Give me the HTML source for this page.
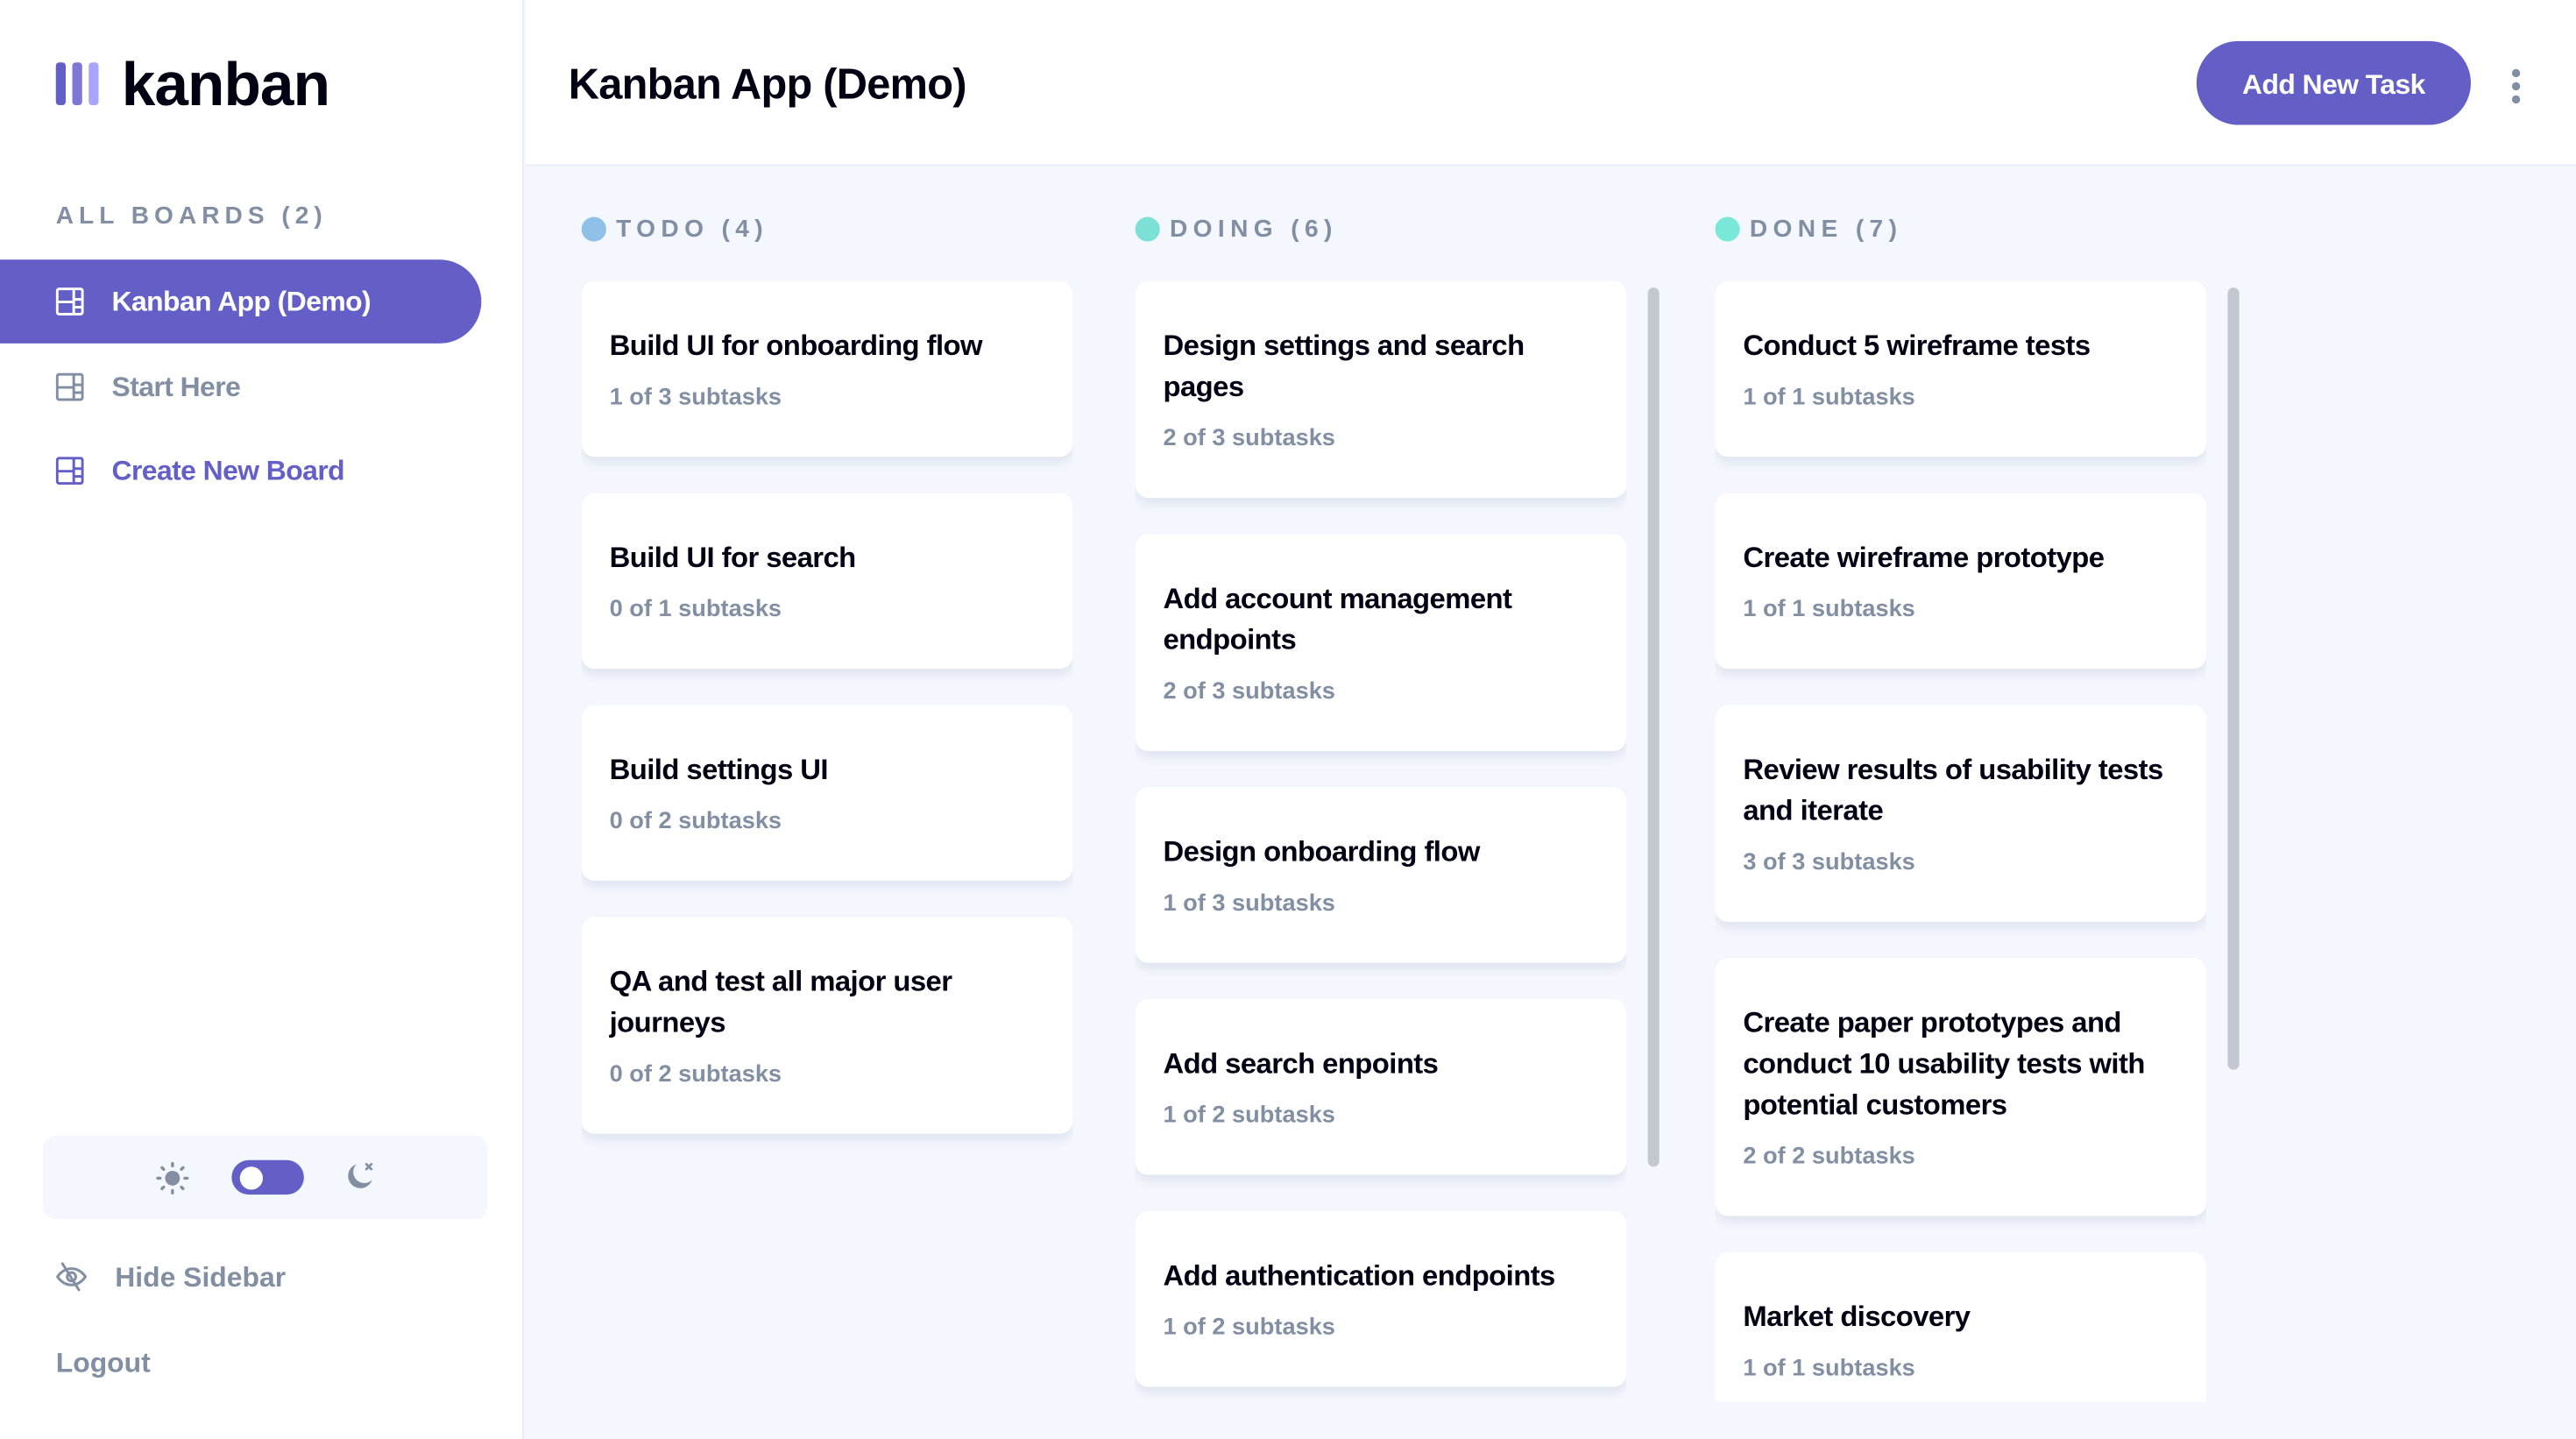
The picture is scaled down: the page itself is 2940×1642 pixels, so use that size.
<!DOCTYPE html>
<html><head><meta charset="utf-8"><style>
*{margin:0;padding:0;box-sizing:border-box}
html,body{width:2940px;height:1642px;overflow:hidden;background:#fff;font-family:"Liberation Sans",sans-serif}
#w{width:1568px;height:876px;transform:scale(1.875);transform-origin:0 0;position:relative;background:#f4f7fd;overflow:hidden}
.side{position:absolute;left:0;top:0;width:319px;height:876px;background:#fff;border-right:1px solid #e4ebfa}
.hdr{position:absolute;left:320px;top:0;right:0;height:101px;background:#fff;border-bottom:1px solid #e4ebfa}
.abs{position:absolute}
.nav{position:absolute;left:0;width:293px;height:51px;display:flex;align-items:center;padding-left:34px;font-size:17px;font-weight:bold;color:#828fa3;letter-spacing:-0.3px}
.nav svg{margin-right:17px}
.colh{position:absolute;top:131px;font-size:15px;font-weight:bold;color:#828fa3;letter-spacing:3.4px;display:flex;align-items:center}
.dot{width:15px;height:15px;border-radius:50%;margin-right:6px}
.col{position:absolute;top:171px;width:299px;height:682px;overflow:hidden}
.card{background:#fff;border-radius:8px;padding:27px 17px 26px;margin-bottom:22px;box-shadow:0 4px 6px rgba(54,78,126,.10)}
.card h3{font-size:17.5px;line-height:25px;color:#000112;font-weight:bold;letter-spacing:-0.3px}
.card p{margin-top:9px;font-size:14.5px;line-height:20px;color:#828fa3;font-weight:bold}
.sb{position:absolute;width:7px;background:#c3c8d0;border-radius:4px}
</style></head><body><div id="w">
<div class="side">
 <div class="abs" style="left:34px;top:38px;width:6px;height:26px;border-radius:2px;background:#635fc7"></div>
 <div class="abs" style="left:44px;top:38px;width:6px;height:26px;border-radius:2px;background:#7c78d3"></div>
 <div class="abs" style="left:54px;top:38px;width:6px;height:26px;border-radius:2px;background:#a8a4ff"></div>
 <div class="abs" style="left:74px;top:31px;font-size:37px;font-weight:bold;color:#000112;letter-spacing:-0.5px">kanban</div>
 <div class="abs" style="left:34px;top:123px;font-size:15px;font-weight:bold;color:#828fa3;letter-spacing:3.2px">ALL BOARDS (2)</div>
 <div class="nav" style="top:158px;background:#635fc7;color:#fff;border-radius:0 26px 26px 0"><svg width="17" height="17" viewBox="0 0 16 16"><path fill="#fff" d="M14 0a2 2 0 0 1 2 2v12a2 2 0 0 1-2 2H2a2 2 0 0 1-2-2V2a2 2 0 0 1 2-2h12ZM1.5 9v5c0 .3.2.5.5.5h7.5V9h-8Zm9.5 3v2.5h3c.3 0 .5-.2.5-.5v-2h-3.5Zm0-4.5V10.5h3.5v-3H11ZM9.5 1.5H2c-.3 0-.5.2-.5.5v5.5h8v-6Zm4.5 0h-3V6h3.5V2c0-.3-.2-.5-.5-.5Z"/></svg>Kanban App (Demo)</div>
 <div class="nav" style="top:210px"><svg width="17" height="17" viewBox="0 0 16 16"><path fill="#828fa3" d="M14 0a2 2 0 0 1 2 2v12a2 2 0 0 1-2 2H2a2 2 0 0 1-2-2V2a2 2 0 0 1 2-2h12ZM1.5 9v5c0 .3.2.5.5.5h7.5V9h-8Zm9.5 3v2.5h3c.3 0 .5-.2.5-.5v-2h-3.5Zm0-4.5V10.5h3.5v-3H11ZM9.5 1.5H2c-.3 0-.5.2-.5.5v5.5h8v-6Zm4.5 0h-3V6h3.5V2c0-.3-.2-.5-.5-.5Z"/></svg>Start Here</div>
 <div class="nav" style="top:261px;color:#635fc7"><svg width="17" height="17" viewBox="0 0 16 16"><path fill="#635fc7" d="M14 0a2 2 0 0 1 2 2v12a2 2 0 0 1-2 2H2a2 2 0 0 1-2-2V2a2 2 0 0 1 2-2h12ZM1.5 9v5c0 .3.2.5.5.5h7.5V9h-8Zm9.5 3v2.5h3c.3 0 .5-.2.5-.5v-2h-3.5Zm0-4.5V10.5h3.5v-3H11ZM9.5 1.5H2c-.3 0-.5.2-.5.5v5.5h8v-6Zm4.5 0h-3V6h3.5V2c0-.3-.2-.5-.5-.5Z"/></svg>Create New Board</div>
 <div class="abs" style="left:26px;top:691px;width:271px;height:51px;background:#f4f7fd;border-radius:8px">
  <svg class="abs" style="left:69px;top:16px" width="20" height="20" viewBox="0 0 20 20" fill="#828fa3"><circle cx="10" cy="10" r="4.5"/><g stroke="#828fa3" stroke-width="1.8" stroke-linecap="round"><path d="M10 1v1.5M10 17.5V19M1 10h1.5M17.5 10H19M3.6 3.6l1 1M15.4 15.4l1 1M3.6 16.4l1-1M15.4 4.6l1-1"/></g></svg>
  <div class="abs" style="left:115px;top:15px;width:44px;height:21px;border-radius:11px;background:#635fc7"><div class="abs" style="left:5px;top:3.5px;width:14px;height:14px;border-radius:50%;background:#fff"></div></div>
  <svg class="abs" style="left:184px;top:16px" width="18" height="18" viewBox="0 0 18 18"><path fill="#828fa3" d="M7 1.5A7.5 7.5 0 1 0 16.5 11 6 6 0 0 1 7 1.5Z"/><path d="M13 1.5l3 3M16 1.5l-3 3" stroke="#828fa3" stroke-width="1.5" stroke-linecap="round"/></svg>
 </div>
 <svg class="abs" style="left:34px;top:768px" width="19" height="18" viewBox="0 0 19 18" fill="none" stroke="#828fa3" stroke-width="1.6"><path d="M1 9s3-5 8.5-5S18 9 18 9s-3 5-8.5 5S1 9 1 9Z"/><circle cx="9.5" cy="9" r="2.6"/><path d="M4 1l10 16" stroke-linecap="round"/></svg>
 <div class="abs" style="left:70px;top:768px;font-size:17px;font-weight:bold;color:#828fa3">Hide Sidebar</div>
 <div class="abs" style="left:34px;top:820px;font-size:17px;font-weight:bold;color:#828fa3">Logout</div>
</div>
<div class="hdr">
 <div class="abs" style="left:26px;top:36px;font-size:26px;font-weight:bold;color:#000112;letter-spacing:-0.4px">Kanban App (Demo)</div>
 <div class="abs" style="left:1017px;top:25px;width:167px;height:51px;border-radius:26px;background:#635fc7;color:#fff;font-size:17px;font-weight:bold;display:flex;align-items:center;justify-content:center;letter-spacing:-0.3px;padding-top:2px">Add New Task</div>
 <div class="abs" style="left:1209px;top:42px;width:5px;height:5px;border-radius:50%;background:#828fa3"></div>
 <div class="abs" style="left:1209px;top:50px;width:5px;height:5px;border-radius:50%;background:#828fa3"></div>
 <div class="abs" style="left:1209px;top:58px;width:5px;height:5px;border-radius:50%;background:#828fa3"></div>
</div>
<div class="colh" style="left:354px"><span class="dot" style="background:#8ec0e8"></span>TODO (4)</div>
<div class="colh" style="left:691px"><span class="dot" style="background:#7ce0d4"></span>DOING (6)</div>
<div class="colh" style="left:1044px"><span class="dot" style="background:#7ae8d8"></span>DONE (7)</div>
<div class="col" style="left:354px">
 <div class="card"><h3>Build UI for onboarding flow</h3><p>1 of 3 subtasks</p></div>
 <div class="card"><h3>Build UI for search</h3><p>0 of 1 subtasks</p></div>
 <div class="card"><h3>Build settings UI</h3><p>0 of 2 subtasks</p></div>
 <div class="card"><h3>QA and test all major user journeys</h3><p>0 of 2 subtasks</p></div>
</div>
<div class="col" style="left:691px">
 <div class="card"><h3>Design settings and search pages</h3><p>2 of 3 subtasks</p></div>
 <div class="card"><h3>Add account management endpoints</h3><p>2 of 3 subtasks</p></div>
 <div class="card"><h3>Design onboarding flow</h3><p>1 of 3 subtasks</p></div>
 <div class="card"><h3>Add search enpoints</h3><p>1 of 2 subtasks</p></div>
 <div class="card"><h3>Add authentication endpoints</h3><p>1 of 2 subtasks</p></div>
 <div class="card"><h3>Research pricing points of various competitors</h3><p>1 of 3 subtasks</p></div>
</div>
<div class="sb" style="left:1003px;top:175px;height:535px"></div>
<div class="col" style="left:1044px">
 <div class="card"><h3>Conduct 5 wireframe tests</h3><p>1 of 1 subtasks</p></div>
 <div class="card"><h3>Create wireframe prototype</h3><p>1 of 1 subtasks</p></div>
 <div class="card"><h3>Review results of usability tests and iterate</h3><p>3 of 3 subtasks</p></div>
 <div class="card"><h3>Create paper prototypes and conduct 10 usability tests with potential customers</h3><p>2 of 2 subtasks</p></div>
 <div class="card"><h3>Market discovery</h3><p>1 of 1 subtasks</p></div>
 <div class="card"><h3>Competitor analysis</h3><p>2 of 2 subtasks</p></div>
</div>
<div class="sb" style="left:1356px;top:175px;height:476px"></div>
</div></body></html>
